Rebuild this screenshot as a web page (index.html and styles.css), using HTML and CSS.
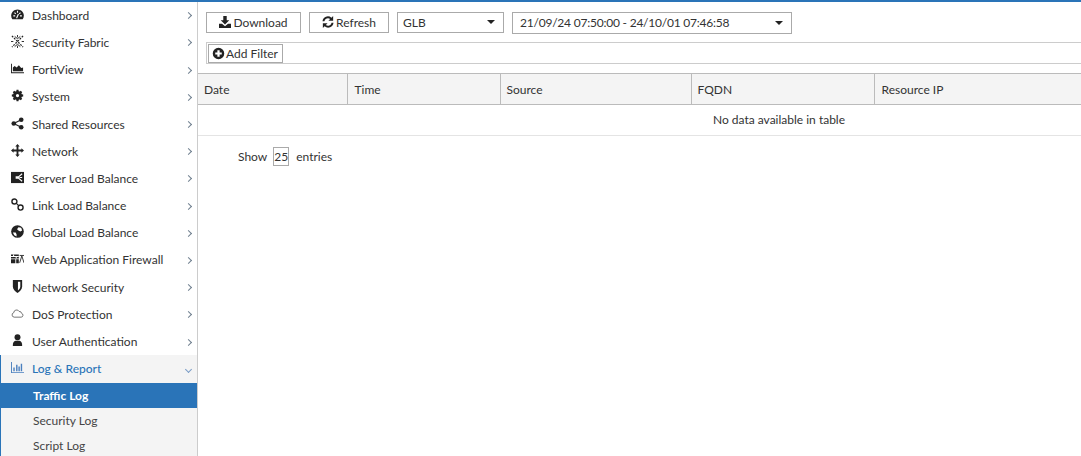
FILE: index.html
```html
<!DOCTYPE html>
<html lang="en">
<head>
<meta charset="utf-8">
<title>Traffic Log</title>
<link rel="stylesheet" href="styles.css">
</head>
<body>
<div class="app">
<nav class="sidebar">
  <a class="item"><svg class="icon" viewBox="0 0 14 14"><path d="M7 1.500C3.200 1.500.2 4.500.2 8.200c0 1.500.4 2.800 1.200 4h11.200c.8-1.200 1.200-2.500 1.200-4 0-3.700-3-6.700-6.800-6.700z"/><path class="cut" d="M7 3v2M2.500 8.500h2M9.700 8.500h2M3.800 5l1.300 1.300M10.200 5L8.900 6.300M6 11l2-4.500"/></svg><span class="label">Dashboard</span><span class="chev"></span></a>
  <a class="item"><svg class="icon" viewBox="0 0 14 14"><path class="line dash" d="M1 1l12 12M13 1L1 13"/><path class="line thin" d="M7 0v2.500M7 11.500V14M0 7h2.500M11.500 7H14M4 1.500L7 4l3-2.500M4 12.500L7 10l3 2.500"/></svg><span class="label">Security Fabric</span><span class="chev"></span></a>
  <a class="item"><svg class="icon" viewBox="0 0 14 14"><path d="M0 2h1v9h13v1.200H0z"/><path d="M2 10V6l2-1.800L6 6l2.500-2.500L11 6.500l2-.5v4z"/></svg><span class="label">FortiView</span><span class="chev"></span></a>
  <a class="item"><svg class="icon" viewBox="-1 -1 16 16"><path fill-rule="evenodd" d="M5.800 0h2.400l.3 1.700 1.200.5 1.400-1 1.700 1.700-1 1.400.5 1.200 1.700.3v2.400l-1.700.3-.5 1.200 1 1.400-1.700 1.700-1.400-1-1.200.5-.3 1.700H5.800l-.3-1.700-1.200-.5-1.400 1-1.700-1.700 1-1.400-.5-1.200L0 8.200V5.800l1.700-.3.500-1.200-1-1.400 1.700-1.700 1.400 1 1.200-.5zM7 5a2 2 0 1 0 0 4 2 2 0 0 0 0-4z"/></svg><span class="label">System</span><span class="chev"></span></a>
  <a class="item"><svg class="icon" viewBox="0 0 14 14"><circle cx="3" cy="7" r="2.500"/><circle cx="11" cy="3" r="2.500"/><circle cx="11" cy="11" r="2.500"/><path class="line" d="M3 7l8-4M3 7l8 4"/></svg><span class="label">Shared Resources</span><span class="chev"></span></a>
  <a class="item"><svg class="icon" viewBox="0 0 14 14"><path d="M7 0l2.400 2.800H8v3.200h3.200V4.600L14 7l-2.800 2.400V8H8v3.200h1.400L7 14l-2.400-2.800H6V8H2.800v1.400L0 7l2.800-2.400V6H6V2.800H4.600z"/></svg><span class="label">Network</span><span class="chev"></span></a>
  <a class="item"><svg class="icon" viewBox="0 0 14 14"><path d="M0 1h14v12H0z"/><path class="cut" d="M12 3L8 6.300H5M12 11L8 7.700H5M8 6v2M12 7H9"/></svg><span class="label">Server Load Balance</span><span class="chev"></span></a>
  <a class="item"><svg class="icon" viewBox="0 0 14 14"><circle class="ring" cx="3.700" cy="3.700" r="2.700"/><circle class="ring" cx="10.300" cy="10.300" r="2.700"/><path class="line" d="M5.500 5.500l3 3"/></svg><span class="label">Link Load Balance</span><span class="chev"></span></a>
  <a class="item"><svg class="icon" viewBox="0 0 14 14"><circle cx="7" cy="7" r="6.800"/><path class="cutfill" d="M8 2.500l3 .5 1 3-2 1-2-1-1.500-1.500zM2 8l3 0 1 2 0 2.500L3.500 11z"/></svg><span class="label">Global Load Balance</span><span class="chev"></span></a>
  <a class="item"><svg class="icon" viewBox="0 0 15 13"><path d="M0 2h9v4.500H0zM0 7.500h5V12H0zM6 7.500h3V12H6z"/><path class="cut" d="M0 4.200h9M3 2v2M6 4.500v2"/><path class="line thin" d="M10 11.500l2.500-8 2.500 8M10 3h5"/></svg><span class="label">Web Application Firewall</span><span class="chev"></span></a>
  <a class="item"><svg class="icon" viewBox="0 0 14 14"><path d="M2 0h10v7c0 3-2.500 5.500-5 7C4.500 12.500 2 10 2 7z"/><path class="cutfill" d="M7.500 2H10v5c0 1.700-1 3-2.500 4.300z"/></svg><span class="label">Network Security</span><span class="chev"></span></a>
  <a class="item"><svg class="icon" viewBox="0 0 16 14"><path class="ring thin" d="M4 11.500a2.800 2.800 0 0 1-.6-5.500 3.500 3.500 0 0 1 6.600-1.500 2.700 2.700 0 0 1 3 2.300 2.400 2.400 0 0 1-.5 4.700z"/></svg><span class="label">DoS Protection</span><span class="chev"></span></a>
  <a class="item"><svg class="icon" viewBox="0 0 14 14"><circle cx="7" cy="3.500" r="3.200"/><path d="M2 13c-.2-3.500 1-5.200 3-5.600h4c2 .4 3.200 2.100 3 5.600z"/></svg><span class="label">User Authentication</span><span class="chev"></span></a>
  <div class="group">
    <a class="item item-open"><svg class="icon icon-open" viewBox="0 0 14 14"><path d="M0 1h1v11h13v1H0z"/><path d="M2.500 7h1.500v4H2.500zM5.500 4h1.500v7H5.500zM8 6h1.500v5H8zM10.500 3H12v8h-1.500z"/></svg><span class="label">Log &amp; Report</span><span class="chev chev-open"></span></a>
    <a class="sub sub-active">Traffic Log</a>
    <a class="sub">Security Log</a>
    <a class="sub">Script Log</a>
  </div>
</nav>
<main class="content">
  <div class="toolbar">
    <button class="btn btn-download"><svg class="btn-icon" viewBox="0 0 14 14"><path d="M5 0h4v5h3L7 10 2 5h3z"/><path d="M0 9h3.500L7 12l3.500-3H14v5H0z"/></svg>Download</button>
    <button class="btn btn-refresh"><svg class="btn-icon" viewBox="0 0 14 14"><path d="M13 0v5.500H7.500l2-2A4.200 4.200 0 0 0 2.800 6H.6A6.200 6.200 0 0 1 11 2zM1 14V8.500h5.500l-2 2A4.200 4.200 0 0 0 11.200 8h2.200A6.200 6.200 0 0 1 3 12z"/></svg>Refresh</button>
    <div class="select select-glb"><span>GLB</span><i class="caret"></i></div>
    <div class="select select-date"><span class="nums">21/09/24 07:50:00 - 24/10/01 07:46:58</span><i class="caret"></i></div>
  </div>
  <div class="filterbar">
    <button class="filter-btn"><svg class="plus" viewBox="0 0 14 14"><path fill-rule="evenodd" d="M7 .8a6.200 6.200 0 1 1 0 12.400A6.200 6.200 0 0 1 7 .8zM5.800 3.500v2.300H3.500v2.400h2.300v2.300h2.400V8.200h2.300V5.800H8.200V3.500z"/></svg>Add Filter</button>
  </div>
  <table class="grid">
    <thead>
      <tr><th class="c1">Date</th><th class="c2">Time</th><th class="c3">Source</th><th class="c4">FQDN</th><th class="c5">Resource IP</th></tr>
    </thead>
    <tbody>
      <tr><td colspan="5">No data available in table</td></tr>
    </tbody>
  </table>
  <div class="pager">Show <span class="size">25</span> entries</div>
</main>
</div>
</body>
</html>
```
FILE: styles.css
```css
* { box-sizing: border-box; }
html, body { margin: 0; padding: 0; height: 100%; overflow: hidden; background: #fff; }
body { font-family: Lato, "Open Sans", sans-serif; font-size: 12px; color: #333; }
.app { height: 456px; display: flex; border-top: 2px solid #2a74b8; overflow: hidden; }
.sidebar { width: 198px; flex: none; border-right: 1px solid #ccc; padding-top: 0; }
.item { height: 27.2px; display: flex; align-items: center; padding-left: 11px; color: #333; position: relative; top: -0.3px; }
.icon { width: 13px; height: 13px; flex: none; fill: #222; margin-top: -2px; }
.label { margin-left: 8px; flex: 1; white-space: nowrap; }
.line { fill: none; stroke: #222; stroke-width: 1.3; }
.dash { stroke-dasharray: 2 1.200; }
.thin { stroke-width: 1; }
.ring { fill: none; stroke: #222; stroke-width: 1.500; }
.ring.thin { stroke: #444; stroke-width: .9; }
.cut { fill: none; stroke: #fff; stroke-width: 1.200; }
.cutfill { fill: #fff; }
.chev { width: 5px; height: 5px; border-top: 1px solid #6f7f8f; border-right: 1px solid #6f7f8f; transform: rotate(45deg); margin: 1px 6px 0 0; }
.group { background: #f4f4f4; border-left: 1px solid #2a74b8; }
.item-open { padding-left: 10px; color: #2a74b8; font-weight: 500; }
.icon-open { fill: #4a7fbe; }
.chev-open { transform: rotate(135deg); border-color: #7a9cc6; }
.sub { display: flex; align-items: center; height: 25px; padding-left: 33px; margin-left: -1px; color: #444; }
.sub-active { background: #2a74b8; color: #fff; font-weight: 700; }
.content { flex: 1; min-width: 0; display: flex; flex-direction: column; overflow: hidden; }
.toolbar { display: flex; align-items: flex-start; padding: 10px 0 0 8px; height: 31px; flex: none; }
.btn { height: 21px; border: 1px solid #aaa; background: #fff; display: flex; align-items: center; justify-content: center; padding: 0 0 1px; font: 12px Lato, sans-serif; color: #333; }
.btn-download { width: 95px; margin-right: 8px; }
.btn-refresh { width: 80px; margin-right: 8px; }
.btn-icon { width: 12px; height: 12px; margin-right: 2px; fill: #222; }
.select { height: 21px; border: 1px solid #aaa; display: flex; align-items: center; justify-content: space-between; padding-bottom: 1px; }
.select-glb { width: 107px; padding-left: 5px; padding-right: 8px; margin-right: 8px; }
.select-date { width: 280px; height: 22px; padding-left: 7px; padding-right: 8px; }
.nums { letter-spacing: -0.22px; }
.caret { width: 0; height: 0; border-left: 4px solid transparent; border-right: 4px solid transparent; border-top: 4px solid #222; }
.filterbar { margin: 9px 0 0 8px; height: 22px; flex: none; border: 1px solid #ccc; border-right: 0; padding: 1px; display: flex; align-items: flex-start; }
.filter-btn { height: 19px; width: 75px; border: 1px solid #aaa; background: #fff; display: flex; align-items: center; padding: 0 0 0 3px; font: 12px Lato, sans-serif; color: #333; }
.plus { width: 13px; height: 13px; flex: none; fill: #222; margin-right: 1px; }
.grid { margin-top: 9px; width: 1162px; flex: none; border-collapse: collapse; table-layout: fixed; }
.grid th { height: 31px; padding: 0 6px; background: #f4f4f4; border-top: 1px solid #bbb; border-bottom: 1px solid #bbb; border-left: 1px solid #bbb; font-weight: 400; text-align: left; }
.grid th:first-child { border-left: 0; }
.grid .c2, .grid .c5 { padding-left: 7px; }
.c1 { width: 149px; }
.c2 { width: 153px; }
.c3 { width: 191px; }
.c4 { width: 183px; }
.grid td { height: 31px; padding: 0 0 2px; text-align: center; border-bottom: 1px solid #e4e4e4; }
.pager { margin: 10px 0 0 40px; display: flex; align-items: center; height: 20px; flex: none; }
.size { height: 19px; width: 16px; border: 1px solid #aaa; margin: 0 7px 0 6px; display: flex; align-items: center; justify-content: center; }
```
